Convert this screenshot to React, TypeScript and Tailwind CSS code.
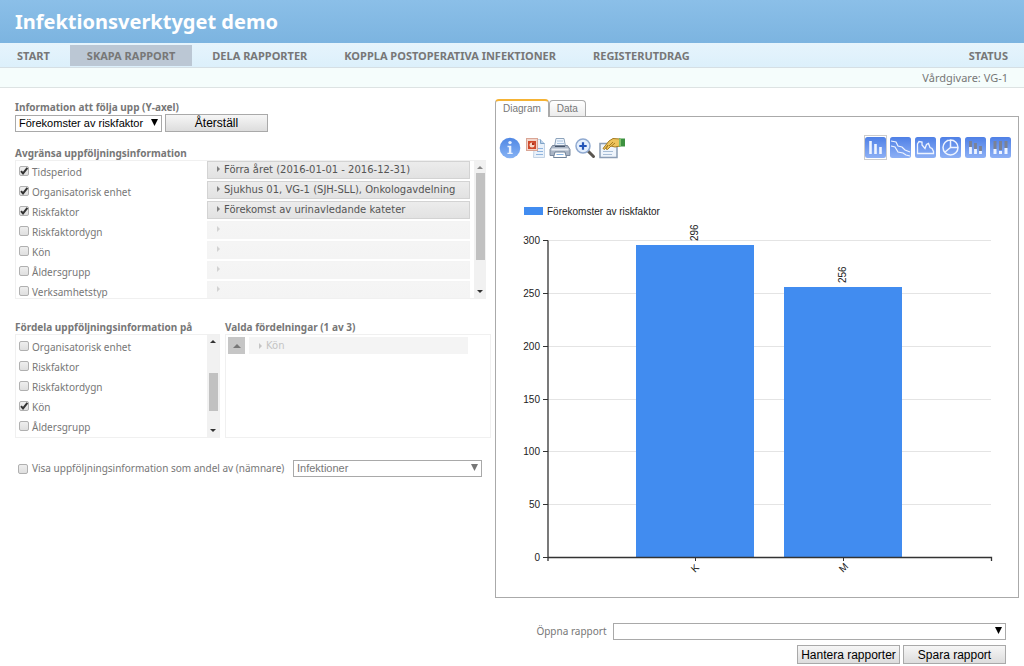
import { useState } from "react"
import type { ReactNode } from "react"

const navItems = ["START", "SKAPA RAPPORT", "DELA RAPPORTER", "KOPPLA POSTOPERATIVA INFEKTIONER", "REGISTERUTDRAG"]

const filters = [
    { name: "Tidsperiod", value: "Förra året (2016-01-01 - 2016-12-31)" },
    { name: "Organisatorisk enhet", value: "Sjukhus 01, VG-1 (SJH-SLL), Onkologavdelning" },
    { name: "Riskfaktor", value: "Förekomst av urinavledande kateter" },
    { name: "Riskfaktordygn", value: "" },
    { name: "Kön", value: "" },
    { name: "Åldersgrupp", value: "" },
    { name: "Verksamhetstyp", value: "" },
]

const groupings = ["Organisatorisk enhet", "Riskfaktor", "Riskfaktordygn", "Kön", "Åldersgrupp"]

const chartData = [
    { label: "K", value: 296 },
    { label: "M", value: 256 },
]

function CheckBox({ id, defaultChecked }: { id: string; defaultChecked?: boolean }) {
    return (
        <span className="relative flex size-[10px] shrink-0">
            <input
                id={id}
                type="checkbox"
                defaultChecked={defaultChecked}
                className="peer size-[10px] appearance-none rounded-xs border border-[#b0b0b0] bg-linear-to-b from-[#eeeeee] to-[#dfdfdf]"
            />
            <svg viewBox="0 0 10 10" className="pointer-events-none absolute inset-0 hidden size-[10px] peer-checked:block">
                <path d="M2 5.2 4 7.4 8.4 1.8" fill="none" stroke="#333" strokeWidth="2" />
            </svg>
        </span>
    )
}

function CheckRow({ id, name, checked }: { id: string; name: string; checked: boolean }) {
    return (
        <li className="flex h-5 shrink-0 items-start gap-[3px] pl-[3px]">
            <CheckBox id={id} defaultChecked={checked} />
            <label htmlFor={id} className="leading-3">{name}</label>
        </li>
    )
}

function Arrow({ className, points = "0,0 8,0 4,8" }: { className: string; points?: string }) {
    return (
        <svg viewBox="0 0 8 8" preserveAspectRatio="none" className={className}>
            <polygon points={points} fill="currentColor" />
        </svg>
    )
}

function ScrollBar({ thumb, dimTop }: { thumb: string; dimTop?: boolean }) {
    return (
        <div className="flex w-3 shrink-0 flex-col items-center bg-[#f1f1f1] py-[5px] text-[#333]">
            <Arrow className={dimTop ? "h-[3px] w-[6px] shrink-0 text-[#888]" : "h-[3px] w-[6px] shrink-0"} points="0,8 8,8 4,0" />
            <div className={thumb} />
            <Arrow className="mt-auto h-[3px] w-[6px] shrink-0" />
        </div>
    )
}

function Button({ children, className }: { children: ReactNode; className: string }) {
    return (
        <button
            type="button"
            className={`border border-[#a9a9a9] bg-linear-to-b from-[#f6f6f6] to-[#dddddd] font-['Liberation_Sans',sans-serif] text-xs text-black ${className}`}
        >
            {children}
        </button>
    )
}

function InfoIcon() {
    return (
        <svg viewBox="0 0 22 22" className="size-[22px]">
            <defs>
                <linearGradient id="info" x1="0" y1="0" x2="0" y2="1">
                    <stop offset="0" stopColor="#4f87e4" />
                    <stop offset="1" stopColor="#86b2f4" />
                </linearGradient>
            </defs>
            <circle cx="11" cy="11" r="10.3" fill="url(#info)" />
            <circle cx="11" cy="5.6" r="1.7" fill="#e8f1ff" />
            <path d="M8.5 8.8h3.8v7h1.4v1.3H8.4v-1.3h1.5v-5.6H8.5z" fill="#e8f1ff" />
        </svg>
    )
}

function SlideIcon() {
    return (
        <svg viewBox="0 0 22 22" className="size-[22px]">
            <path d="M10.500 2.500h6l4 4v14h-11z" fill="#e9f1fa" stroke="#c3d3e5" />
            <path d="M16.500 2.500v4h4" fill="#bcd2ea" stroke="#7fa3c7" />
            <path d="M14 11.500h5M13 14.500h6M12 17.500h7" stroke="#8fb4de" />
            <rect x="2.500" y="1.500" width="11" height="12" fill="#f3d5ca" stroke="#d9a595" />
            <rect x="4" y="4" width="8" height="8" fill="#cf4a2c" />
            <circle cx="8" cy="8" r="2.500" fill="#f9d9c8" />
            <path d="M8 8V5.500A2.500 2.500 0 0 1 10.500 8z" fill="#b02d16" />
        </svg>
    )
}

function PrinterIcon() {
    return (
        <svg viewBox="0 0 22 22" className="size-[22px]">
            <path d="M7 1.500h8l1.500 8h-11z" fill="#eef5fd" stroke="#8da3bb" />
            <path d="M8 4h6M8 6.500h7" stroke="#a9c2de" />
            <path d="M3.500 8.500h15l2.500 4v6H1v-6z" fill="#aab5c5" stroke="#7b899d" />
            <path d="M2.500 12.500h17" stroke="#e9edf3" strokeWidth="2" />
            <path d="M6 9.500h10" stroke="#47566b" />
            <path d="M6 15h10l1.500 5.500h-13z" fill="#fff" stroke="#71849b" />
            <path d="M7.500 17.500h7" stroke="#86b3e3" />
        </svg>
    )
}

function ZoomIcon() {
    return (
        <svg viewBox="0 0 22 22" className="size-[22px]">
            <path d="m14 14 5.500 5.500" stroke="#5a5650" strokeWidth="3" strokeLinecap="round" />
            <circle cx="9" cy="9" r="7" fill="#e4effd" stroke="#8fa9d0" strokeWidth="1.500" />
            <path d="M9 5.300v7.400M5.300 9h7.400" stroke="#2455b8" strokeWidth="2.200" />
        </svg>
    )
}

function PropertiesIcon() {
    return (
        <svg viewBox="0 0 28 22" className="h-[22px] w-7">
            <path d="M1 6.500h17v14H1z" fill="#eef4fb" stroke="#8b9db5" strokeWidth="1.500" />
            <path d="M4 14.500h10M4 17.500h9" stroke="#a7bdd6" />
            <path d="M4 11.500 10 4l4-2.500 7 .5v7l-5 1-4-1-3.500 3.500-1.500-.5 2-4-3.500 4.500z" fill="#edc35c" stroke="#a67c20" />
            <path d="m10 9 4-4M12.500 9 16 6" stroke="#a67c20" />
            <path d="M20 1.500h6v8h-6z" fill="#3d9140" />
            <path d="M20 1.500h2v8h-2z" fill="#80c06c" />
        </svg>
    )
}

function ChartTypeIcon({ children }: { children: ReactNode }) {
    return (
        <svg viewBox="0 0 21 21" className="size-[21px]" fill="none" stroke="#eef4ff">
            <rect width="21" height="21" rx="2.500" fill="url(#tile)" stroke="none" />
            {children}
        </svg>
    )
}

const tools = [
    { name: "Information", icon: <InfoIcon /> },
    { name: "Exportera till PowerPoint", icon: <SlideIcon /> },
    { name: "Skriv ut", icon: <PrinterIcon /> },
    { name: "Zooma", icon: <ZoomIcon /> },
    { name: "Egenskaper", icon: <PropertiesIcon /> },
]

const chartTypes = [
    { name: "Stapeldiagram", shape: <path d="M5.500 4v13M10.500 7v10M15.500 10v7" strokeWidth="2.600" /> },
    { name: "Linjediagram", shape: <path d="M1 4l5 1 2 4 4 1 3 3 5 2M1 9l4 1 3 5 5 1 3 2 4 1" strokeWidth="1.200" /> },
    { name: "Ytdiagram", shape: <path d="M2.500 16.500V7L4 4.500l3 .500v3l3 3.500 1.500-4 2-1 1.500 4 2 1 1.500 3v2z" strokeWidth="1.300" /> },
    { name: "Cirkeldiagram", shape: <path d="M10.500 3a7.500 7.500 0 1 0 0 15 7.500 7.500 0 0 0 0-15v7.500h7.500M10.500 10.500l-6 5" strokeWidth="1.500" /> },
    {
        name: "Staplat diagram",
        shape: (
            <>
                <path d="M5.500 4v7M10.500 6v6M15.500 9v5" stroke="#7b8294" strokeWidth="2.800" />
                <path d="M5.500 10v7M10.500 12v5M15.500 14v3" strokeWidth="2.800" />
            </>
        ),
    },
    {
        name: "Procentdiagram",
        shape: (
            <>
                <path d="M5 4v8M10.500 4v9M16 4v7" stroke="#7b8294" strokeWidth="3" />
                <path d="M5 12v5M10.500 14v3M16 11v6" strokeWidth="3" />
            </>
        ),
    },
]

function Chart() {
    const bottom = 388
    const y = (v: number) => Math.round(bottom - (v * 317) / 300)

    return (
        <svg viewBox="0 0 522 427" className="block w-full font-['Liberation_Sans',sans-serif] text-[10px]" fill="#222">
            <rect x="28" y="37" width="19" height="8" fill="#418cf0" />
            <text x="51" y="45">Förekomster av riskfaktor</text>
            {[300, 250, 200, 150, 100, 50, 0].map((v) => (
                <g key={v}>
                    <path d={`M52 ${y(v) - 0.5}H495`} stroke="#e4e4e4" />
                    <path d={`M47 ${y(v) - 0.5}H52`} stroke="#333" />
                    <text x="44" y={y(v) + 3} textAnchor="end">{v}</text>
                </g>
            ))}
            {chartData.map((d, i) => {
                const x = 140 + i * 148
                return (
                    <g key={d.label}>
                        <rect x={x} y={y(d.value)} width="118" height={bottom - y(d.value)} fill="#418cf0" />
                        <path d={`M${x + 59.5} ${bottom}v3`} stroke="#333" />
                        <text transform={`translate(${x + 62} ${y(d.value) - 4}) rotate(-90)`}>{d.value}</text>
                        <text transform={`translate(${x + 59} ${bottom + 15}) rotate(-45)`}>{d.label}</text>
                    </g>
                )
            })}
            <path d="M52 70.500V391M52 387.500H495.500V391" fill="none" stroke="#333" strokeWidth="1.300" />
        </svg>
    )
}

export default function App() {
    const [tab, setTab] = useState("Diagram")
    const [type, setType] = useState("Stapeldiagram")

    return (
        <div className="min-h-screen bg-white font-['Noto_Sans',sans-serif] text-[10px] text-[#777]">
            <svg className="absolute size-0">
                <linearGradient id="tile" x1="0" y1="0" x2="0" y2="1">
                    <stop offset="0" stopColor="#4f80e6" />
                    <stop offset="1" stopColor="#8db0f5" />
                </linearGradient>
            </svg>

            <header className="text-[11px]">
                <div className="flex h-[43px] items-center bg-linear-to-b from-[#8bbfe8] to-[#7cb4e0] px-[15px]">
                    <h1 className="text-xl font-bold text-white">Infektionsverktyget demo</h1>
                </div>
                <nav className="flex h-[25px] items-center gap-[3px] border-b border-[#d5dfe4] bg-linear-to-b from-[#e6f4fc] to-[#dcf0fb] leading-[21px] font-bold">
                    {navItems.map((item) => (
                        <a key={item} href="#" className={item === "SKAPA RAPPORT" ? "bg-[#bbc7d4] px-[17px]" : "px-[17px]"}>
                            {item}
                        </a>
                    ))}
                    <a href="#" className="ml-auto px-4">STATUS</a>
                </nav>
                <div className="flex h-5 items-center justify-end border-b border-[#dde3e3] bg-[#f5fdfc] px-4 pt-px">Vårdgivare: VG-1</div>
            </header>

            <main className="flex items-start gap-1 pr-[5px] pl-[15px]">
                <section className="w-[476px] shrink-0 pt-3">
                    <label htmlFor="measure" className="block leading-[14px] font-bold">Information att följa upp (Y-axel)</label>
                    <div className="flex items-center gap-[3px]">
                        <div className="relative w-[147px]">
                            <select
                                id="measure"
                                className="block h-[17px] w-full appearance-none border border-[#a9a9a9] bg-white pl-[3px] font-['Liberation_Sans',sans-serif] text-[11px] leading-[15px] text-black"
                            >
                                <option>Förekomster av riskfaktor</option>
                            </select>
                            <Arrow className="pointer-events-none absolute top-1 right-1 size-[7px] text-black" />
                        </div>
                        <Button className="h-[18px] w-[103px] leading-4">Återställ</Button>
                    </div>

                    <h2 className="mt-[14px] leading-[14px] font-bold">Avgränsa uppföljningsinformation</h2>
                    <div className="flex h-[139px] w-[471px] overflow-hidden border border-r-0 border-[#f0f0f0]">
                        <ul className="flex w-[191px] shrink-0 flex-col pt-[5px]">
                            {filters.map((f) => (
                                <CheckRow key={f.name} id={`filter-${f.name}`} name={f.name} checked={f.value !== ""} />
                            ))}
                        </ul>
                        <div className="flex flex-1 flex-col gap-[2px]">
                            {filters.map((f) => (
                                <button
                                    key={f.name}
                                    type="button"
                                    disabled={!f.value}
                                    aria-label={f.name}
                                    className="flex h-[18px] w-[263px] shrink-0 items-center gap-1 overflow-hidden border border-[#d3d3d3] bg-linear-to-b from-[#ececec] to-[#e2e2e2] px-[9px] pb-[2px] font-['DejaVu_Sans',sans-serif] text-[10px] whitespace-nowrap text-[#555] disabled:border-[#f4f4f4] disabled:from-[#f5f5f5] disabled:to-[#f4f4f4] disabled:text-[#c4c4c4]"
                                >
                                    <Arrow className="h-[6px] w-[3px] shrink-0 opacity-70" points="0,0 8,4 0,8" />
                                    {f.value}
                                </button>
                            ))}
                        </div>
                        <ScrollBar dimTop thumb="mt-1 h-[87px] w-[9px] shrink-0 bg-[#c1c1c1]" />
                    </div>

                    <div className="mt-[21px] flex gap-[5px]">
                        <div className="w-[205px]">
                            <h2 className="leading-[14px] font-bold whitespace-nowrap">Fördela uppföljningsinformation på</h2>
                            <div className="flex h-[104px] overflow-hidden border border-[#f0f0f0]">
                                <ul className="flex flex-1 flex-col pt-[6px]">
                                    {groupings.map((g) => (
                                        <CheckRow key={g} id={`group-${g}`} name={g} checked={g === "Kön"} />
                                    ))}
                                </ul>
                                <ScrollBar thumb="mt-[30px] h-[38px] w-[9px] shrink-0 bg-[#c1c1c1]" />
                            </div>
                        </div>
                        <div className="flex-1">
                            <h2 className="leading-[14px] font-bold">Valda fördelningar (1 av 3)</h2>
                            <div className="flex h-[104px] gap-1 border border-[#f0f0f0] p-[2px]">
                                <button type="button" aria-label="Flytta upp" className="flex size-[17px] items-center justify-center bg-[#c6c6c6] text-[#777]">
                                    <Arrow className="h-1 w-2" points="0,8 8,8 4,0" />
                                </button>
                                <button
                                    type="button"
                                    disabled
                                    className="flex h-[17px] w-[219px] items-center gap-1 bg-[#f4f4f4] px-[10px] font-['DejaVu_Sans',sans-serif] text-[10px] text-[#c4c4c4]"
                                >
                                    <Arrow className="h-[6px] w-[3px]" points="0,0 8,4 0,8" />
                                    Kön
                                </button>
                            </div>
                        </div>
                    </div>

                    <div className="mt-[22px] flex items-center pl-[3px]">
                        <CheckBox id="share" />
                        <label htmlFor="share" className="ml-1 whitespace-nowrap">Visa uppföljningsinformation som andel av (nämnare)</label>
                        <div className="relative mr-[9px] ml-auto w-[189px]">
                            <select
                                aria-label="Nämnare"
                                className="block h-[17px] w-full appearance-none border border-[#a9a9a9] bg-white pl-[3px] font-['Liberation_Sans',sans-serif] text-[11px] leading-[15px]"
                            >
                                <option>Infektioner</option>
                            </select>
                            <Arrow className="pointer-events-none absolute top-1 right-1 size-[7px]" />
                        </div>
                    </div>
                </section>

                <section className="min-w-0 flex-1 pt-[11px]">
                    <div role="tablist" className="flex h-[17px] items-end font-['Liberation_Sans',sans-serif]">
                        {["Diagram", "Data"].map((t) => (
                            <button
                                key={t}
                                type="button"
                                role="tab"
                                aria-selected={tab === t}
                                onClick={() => setTab(t)}
                                className={
                                    tab === t
                                        ? "relative z-10 -mb-px h-[18px] rounded-t-sm border border-t-2 border-b-0 border-[#aaa] border-t-[#f5b335] bg-white px-[7px] pb-[2px] leading-[13px]"
                                        : "h-4 rounded-t-sm border border-b-0 border-[#aaa] bg-linear-to-b from-white to-[#ececec] px-[7px] pb-px leading-[13px]"
                                }
                            >
                                {t}
                            </button>
                        ))}
                    </div>
                    <div className="border border-[#aaa]">
                        <div className="flex items-center justify-between pt-[18px] pr-[6px] pl-[3px]">
                            <div className="flex gap-[3px]">
                                {tools.map((t) => (
                                    <button key={t.name} type="button" aria-label={t.name}>{t.icon}</button>
                                ))}
                            </div>
                            <div className="flex gap-[2px]">
                                {chartTypes.map((t) => (
                                    <button
                                        key={t.name}
                                        type="button"
                                        aria-label={t.name}
                                        onClick={() => setType(t.name)}
                                        className={type === t.name ? "border border-[#ccc] py-px" : "border border-transparent py-px"}
                                    >
                                        <ChartTypeIcon>{t.shape}</ChartTypeIcon>
                                    </button>
                                ))}
                            </div>
                        </div>
                        <div className="mt-[10px]">
                            <Chart />
                        </div>
                    </div>

                    <div className="mt-[25px] mr-[13px] flex items-center justify-end gap-[6px]">
                        <label htmlFor="report">Öppna rapport</label>
                        <div className="relative w-[77%]">
                            <select id="report" className="block h-[17px] w-full appearance-none border border-[#a9a9a9] bg-white" />
                            <Arrow className="pointer-events-none absolute top-1 right-1 size-[7px] text-black" />
                        </div>
                    </div>
                    <div className="mt-[5px] mr-[13px] flex justify-end gap-[3px]">
                        <Button className="h-[19px] w-[103px] leading-4">Hantera rapporter</Button>
                        <Button className="h-[19px] w-[103px] leading-4">Spara rapport</Button>
                    </div>
                </section>
            </main>
        </div>
    )
}
